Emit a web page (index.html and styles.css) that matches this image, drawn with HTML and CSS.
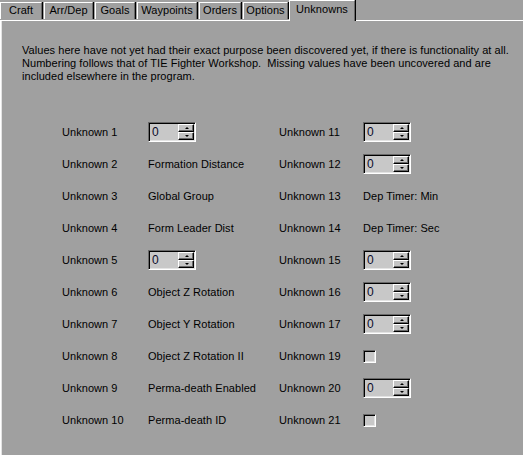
FILE: index.html
```html
<!DOCTYPE html>
<html>
<head>
<meta charset="utf-8">
<link rel="stylesheet" href="styles.css">
</head>
<body>
<div class="tabs">
  <div class="tab t-craft">Craft</div>
  <div class="tab t-arr">Arr/Dep</div>
  <div class="tab t-goals">Goals</div>
  <div class="tab t-way">Waypoints</div>
  <div class="tab t-orders">Orders</div>
  <div class="tab t-options">Options</div>
  <div class="tab t-unk active">Unknowns</div>
</div>
<div class="panel">
  <p class="intro">Values here have not yet had their exact purpose been discovered yet, if there is functionality at all.<br>Numbering follows that of TIE Fighter Workshop.&nbsp; Missing values have been uncovered and are<br>included elsewhere in the program.</p>
  <div class="grid">
    <div class="lbl">Unknown 1</div>
    <div class="val"><div class="spin"><span class="num">0</span><span class="btns"><span class="btn up"></span><span class="btn down"></span></span></div></div>
    <div class="lbl">Unknown 11</div>
    <div class="val"><div class="spin"><span class="num">0</span><span class="btns"><span class="btn up"></span><span class="btn down"></span></span></div></div>

    <div class="lbl">Unknown 2</div>
    <div class="val">Formation Distance</div>
    <div class="lbl">Unknown 12</div>
    <div class="val"><div class="spin"><span class="num">0</span><span class="btns"><span class="btn up"></span><span class="btn down"></span></span></div></div>

    <div class="lbl">Unknown 3</div>
    <div class="val">Global Group</div>
    <div class="lbl">Unknown 13</div>
    <div class="val">Dep Timer: Min</div>

    <div class="lbl">Unknown 4</div>
    <div class="val">Form Leader Dist</div>
    <div class="lbl">Unknown 14</div>
    <div class="val">Dep Timer: Sec</div>

    <div class="lbl">Unknown 5</div>
    <div class="val"><div class="spin"><span class="num">0</span><span class="btns"><span class="btn up"></span><span class="btn down"></span></span></div></div>
    <div class="lbl">Unknown 15</div>
    <div class="val"><div class="spin"><span class="num">0</span><span class="btns"><span class="btn up"></span><span class="btn down"></span></span></div></div>

    <div class="lbl">Unknown 6</div>
    <div class="val">Object Z Rotation</div>
    <div class="lbl">Unknown 16</div>
    <div class="val"><div class="spin"><span class="num">0</span><span class="btns"><span class="btn up"></span><span class="btn down"></span></span></div></div>

    <div class="lbl">Unknown 7</div>
    <div class="val">Object Y Rotation</div>
    <div class="lbl">Unknown 17</div>
    <div class="val"><div class="spin"><span class="num">0</span><span class="btns"><span class="btn up"></span><span class="btn down"></span></span></div></div>

    <div class="lbl">Unknown 8</div>
    <div class="val">Object Z Rotation II</div>
    <div class="lbl">Unknown 19</div>
    <div class="val"><span class="check"></span></div>

    <div class="lbl">Unknown 9</div>
    <div class="val">Perma-death Enabled</div>
    <div class="lbl">Unknown 20</div>
    <div class="val"><div class="spin"><span class="num">0</span><span class="btns"><span class="btn up"></span><span class="btn down"></span></span></div></div>

    <div class="lbl">Unknown 10</div>
    <div class="val">Perma-death ID</div>
    <div class="lbl">Unknown 21</div>
    <div class="val"><span class="check"></span></div>
  </div>
</div>
</body>
</html>
```
FILE: styles.css
```css
html, body {
  margin: 0;
  padding: 0;
  background: #a0a0a0;
  font-family: "Liberation Sans", Arial, sans-serif;
  font-size: 11px;
  letter-spacing: 0.05px;
  color: #000;
  height: 455px;
  overflow: hidden;
}

.tabs {
  display: flex;
  align-items: flex-end;
  height: 20px;
  position: relative;
  z-index: 1;
}

.tab {
  box-sizing: border-box;
  flex: none;
  height: 17px;
  line-height: 15px;
  text-align: center;
  border-top: 1px solid #fff;
  border-left: 1px solid #fff;
  border-right: 1px solid #696969;
  box-shadow: 1px 0 0 #000;
  margin-right: 2px;
  margin-bottom: 1px;
  white-space: nowrap;
}

.t-craft { width: 42px; }
.t-arr { width: 49px; }
.t-goals { width: 40px; }
.t-way { width: 60px; }
.t-orders { width: 42px; }
.t-options { width: 45px; }
.t-unk { width: 66px; }

.tab.active {
  height: 21px;
  margin-bottom: -1px;
  line-height: 17px;
  background: #a0a0a0;
  margin-left: -1px;
}

.panel {
  box-sizing: border-box;
  height: 435px;
  border-top: 1px solid #fff;
  border-left: 1px solid #fff;
  box-shadow: inset 1px 0 0 #e3e3e3;
  padding-left: 21px;
}

.intro {
  margin: 23px 0 0 0;
  line-height: 13px;
}

.grid {
  display: grid;
  grid-template-columns: 86px 131px 84px auto;
  grid-auto-rows: 32px;
  margin-top: 33px;
  margin-left: 40px;
  align-items: center;
}

.lbl, .val {
  white-space: nowrap;
}

.spin {
  box-sizing: border-box;
  width: 48px;
  height: 20px;
  display: flex;
  align-items: center;
  justify-content: space-between;
  background: #c8c8c8;
  border-top: 1px solid #696969;
  border-left: 1px solid #696969;
  border-right: 1px solid #fff;
  border-bottom: 1px solid #fff;
  box-shadow: inset 1px 1px 0 #000, inset -1px -1px 0 #e3e3e3;
}

.num {
  padding-left: 3px;
  color: #0a0a28;
  font-size: 12px;
}

.btns {
  display: flex;
  flex-direction: column;
  width: 16px;
  height: 16px;
  margin-right: 1px;
}

.btn {
  box-sizing: border-box;
  flex: 1;
  background: #c4c4c4;
  border-top: 1px solid #fff;
  border-left: 1px solid #fff;
  border-right: 1px solid #000;
  border-bottom: 1px solid #000;
  box-shadow: inset -1px -1px 0 #696969;
  position: relative;
}

.btn::after {
  content: "";
  position: absolute;
  left: 6px;
  width: 0;
  height: 0;
  border-left: 2px solid transparent;
  border-right: 2px solid transparent;
}

.btn.up::after {
  top: 2px;
  border-bottom: 2px solid #000;
}

.btn.down::after {
  top: 2px;
  border-top: 2px solid #000;
}

.check {
  display: block;
  box-sizing: border-box;
  width: 13px;
  height: 13px;
  background: #c8c8c8;
  border-top: 1px solid #696969;
  border-left: 1px solid #696969;
  border-right: 1px solid #fff;
  border-bottom: 1px solid #fff;
  box-shadow: inset 1px 1px 0 #000, inset -1px -1px 0 #e3e3e3;
}
```
